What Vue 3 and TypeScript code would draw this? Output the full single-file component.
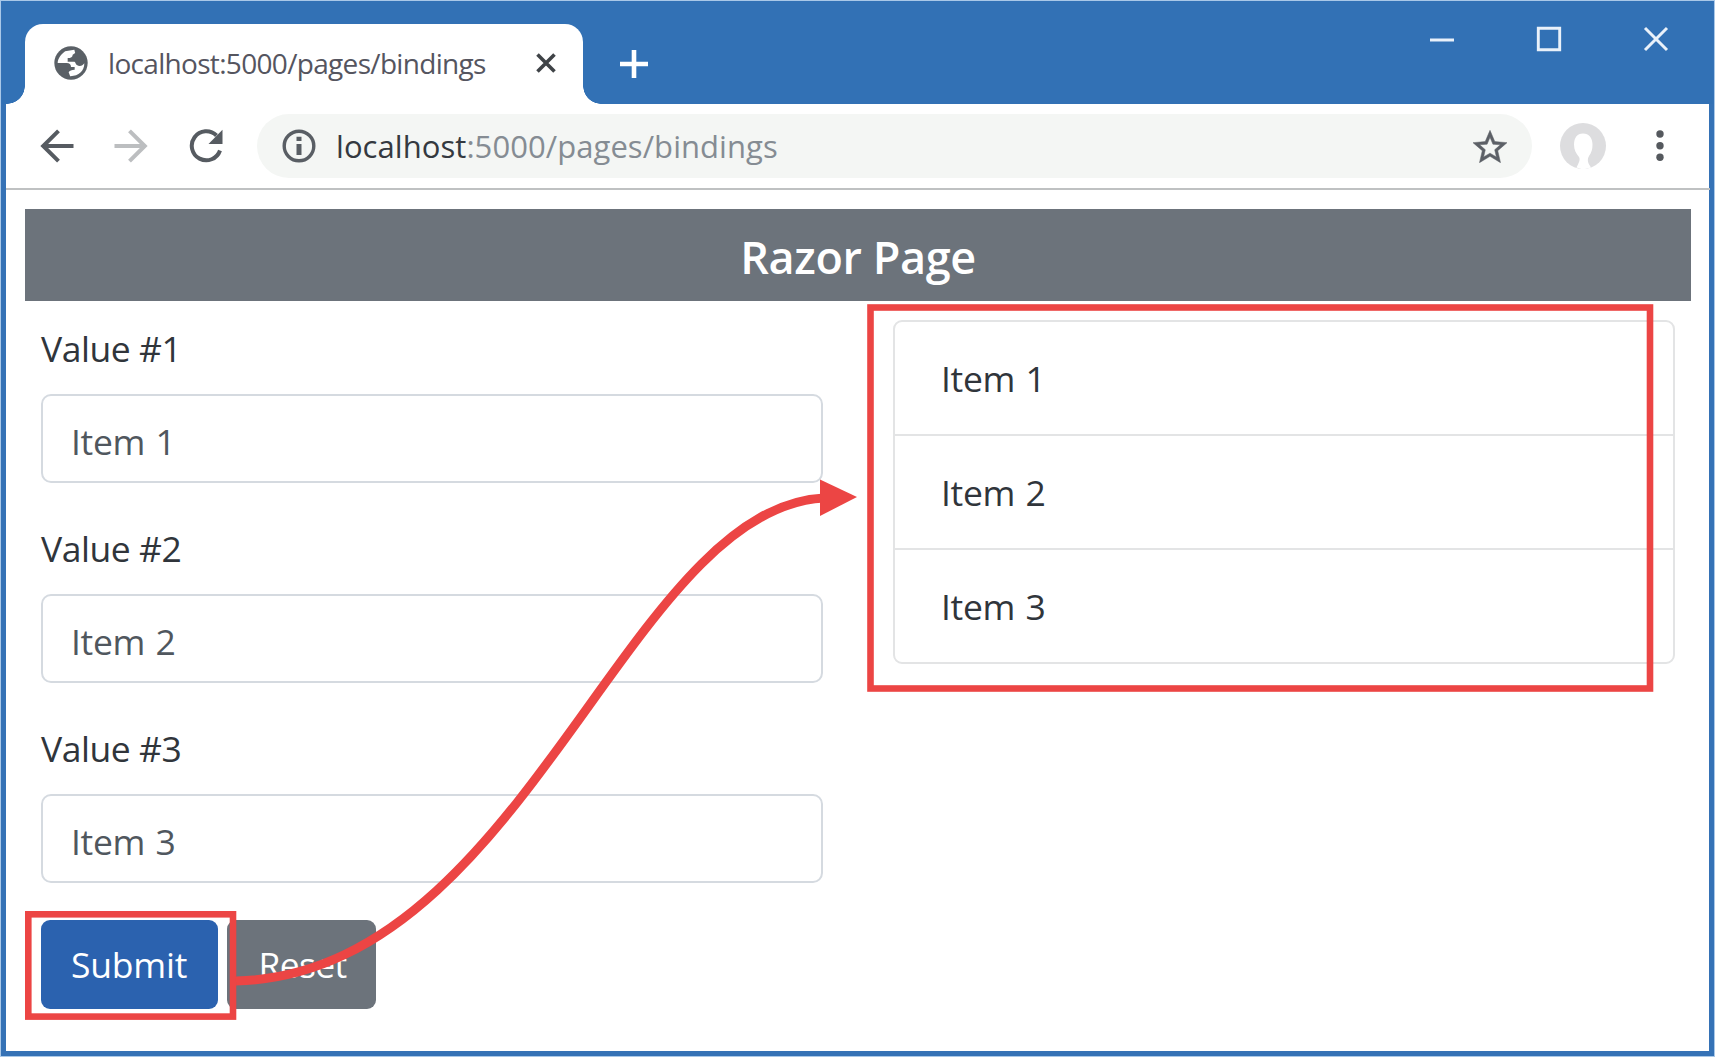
<script setup lang="ts">
import { ref } from 'vue'

const address = ref({ host: 'localhost', rest: ':5000/pages/bindings' })
const values = ref<string[]>(['Item 1', 'Item 2', 'Item 3'])
const items = ref<string[]>([...values.value])

function submit() {
  items.value = [...values.value]
}
function reset() {
  values.value = ['Item 1', 'Item 2', 'Item 3']
}
</script>

<template>
  <div class="window">
    <header class="titlebar">
      <div class="tab">
        <svg class="globe" viewBox="0 0 24 24" width="40" height="40">
          <circle cx="12" cy="12" r="10" fill="#5a6066" />
          <path fill="#fff" d="M14 4L8.500 5C6 7 4.200 9 4 12H9.500C11 12 12 12.800 12 14.400H14.200V16C12.500 16 11 16.600 10.600 17.600L11.500 19.900C16.500 20 20 17 20 12.200C19 13.800 17 14.200 15.500 13.200C14.500 12.500 15 11.200 13.500 11.200H10V9C12 9 13 8.400 13 7L14.500 6Z" />
        </svg>
        <span class="tab-title">{{ address.host }}{{ address.rest }}</span>
        <svg class="tab-close" viewBox="0 0 20 20" width="20" height="20"><path d="M1.500 1.500 18.500 18.500M18.500 1.500 1.500 18.500" stroke="#3f4347" stroke-width="3.600" /></svg>
      </div>
      <svg class="plus" viewBox="0 0 28 28" width="28" height="28"><path d="M14 0V28M0 14H28" stroke="#fff" stroke-width="4.600" /></svg>
      <div class="controls">
        <svg viewBox="0 0 26 26" width="26" height="26"><path d="M1 14H25" stroke="#e9f1fa" stroke-width="3" /></svg>
        <svg viewBox="0 0 26 26" width="26" height="26"><path d="M2.300 2.300H23.700V23.700H2.300Z" fill="none" stroke="#e9f1fa" stroke-width="2.900" /></svg>
        <svg viewBox="0 0 26 26" width="26" height="26"><path d="M2 2 24 24M24 2 2 24" stroke="#e9f1fa" stroke-width="3" /></svg>
      </div>
    </header>

    <nav class="toolbar">
      <svg class="back" viewBox="0 0 34 34" width="34" height="34"><path d="M33.500 17H3M18.500 1.800 3.200 17 18.500 32.200" fill="none" stroke="#565b61" stroke-width="4" /></svg>
      <svg class="forward" viewBox="0 0 34 34" width="34" height="34"><path d="M.5 17H31M15.500 1.800 30.800 17 15.500 32.200" fill="none" stroke="#bcbec0" stroke-width="4" /></svg>
      <svg class="reload" viewBox="0 0 34 34" width="34" height="34">
        <path d="M27.500 6.500A14.500 14.500 0 1 0 31 21.500" fill="none" stroke="#565b61" stroke-width="4" />
        <path d="M33.500 .8V15H19.500Z" fill="#565b61" />
      </svg>
      <div class="omnibox">
        <svg class="info" viewBox="0 0 34 34" width="34" height="34">
          <circle cx="17" cy="17" r="14.800" fill="none" stroke="#595e64" stroke-width="3.400" />
          <path d="M17 15V26M17 7.800V12" stroke="#595e64" stroke-width="5" />
        </svg>
        <span class="url"><span class="host">{{ address.host }}</span>{{ address.rest }}</span>
        <svg class="star" viewBox="2 2 20 19" width="34" height="33"><path fill="#5c6066" stroke="#5c6066" stroke-width=".3" d="M22 9.240l-7.190-.62L12 2 9.190 8.630 2 9.240l5.460 4.730L5.820 21 12 17.270 18.180 21l-1.630-7.030L22 9.240zM12 15.400l-3.760 2.270 1-4.280-3.320-2.880 4.380-.38L12 6.100l1.710 4.040 4.380.38-3.320 2.880 1 4.280L12 15.400z" /></svg>
      </div>
      <svg class="avatar" viewBox="0 0 46 46" width="46" height="46">
        <circle cx="23" cy="23" r="23" fill="#dddddf" />
        <path d="M23 10.500C17 10.500 14 15 14 21.500C14 27 16 30.500 19 34C20.500 36.500 19 39.500 16.500 44.500L23 46.500L31 44.500C27.500 39.500 27 36.500 29 33C31.500 29.500 32.500 26.500 32.500 21.500C32.500 15 29 10.500 23 10.500Z" fill="#fff" />
      </svg>
      <svg class="menu" viewBox="0 0 8 32" width="8" height="32"><g fill="#55595e"><circle cx="4" cy="4" r="3.700" /><circle cx="4" cy="15.700" r="3.700" /><circle cx="4" cy="27.300" r="3.700" /></g></svg>
    </nav>

    <main class="page">
      <h1 class="banner">Razor Page</h1>
      <div class="columns">
        <form class="form" @submit.prevent="submit">
          <div v-for="(_, i) in values" :key="i" class="field">
            <label :for="`value-${i}`">Value #{{ i + 1 }}</label>
            <input :id="`value-${i}`" v-model="values[i]" type="text" />
          </div>
          <div class="actions">
            <button class="btn primary" type="submit">Submit</button>
            <button class="btn secondary" type="button" @click="reset">Reset</button>
          </div>
        </form>
        <ul class="list">
          <li v-for="item in items" :key="item">{{ item }}</li>
        </ul>
      </div>
    </main>

    <svg class="callouts" viewBox="0 0 1715 1057" width="1715" height="1057">
      <g fill="none" stroke="#ec4544">
        <rect x="870.500" y="307.500" width="779.500" height="381" stroke-width="6.600" />
        <rect x="28.300" y="914.300" width="204.700" height="102.300" stroke-width="6.600" />
        <path d="M236 981C524 974 626 508 824 498" stroke-width="9" />
      </g>
      <path d="M820 479.500 857 497 820 516Z" fill="#ec4544" />
    </svg>
  </div>
</template>

<style>
body {
  margin: 0;
  background: #fff;
}
</style>

<style scoped>
* {
  box-sizing: border-box;
}
.window {
  position: relative;
  width: 1715px;
  height: 1057px;
  overflow: hidden;
  padding: 0 4px 5px 6px;
  background: #fff;
  border: 1px solid #a9c8e8;
  box-shadow: inset 0 0 0 5px #3572b6;
  font-family: "Open Sans", "Noto Sans", sans-serif;
  font-size: 35.500px;
  color: #30353b;
}
.titlebar {
  display: flex;
  height: 103px;
  margin: 0 -3px 0 -5px;
  padding: 23px 44px 0 23px;
  background: #3271b5;
}
.tab {
  position: relative;
  display: flex;
  align-items: center;
  width: 558px;
  height: 80px;
  padding: 0 27px 2px 29px;
  border-radius: 18px 18px 0 0;
  background: #fff;
}
.tab::before,
.tab::after {
  content: "";
  position: absolute;
  bottom: 0;
  width: 18px;
  height: 18px;
}
.tab::before {
  left: -18px;
  background: radial-gradient(circle at 0 0, transparent 17.500px, #fff 18px);
}
.tab::after {
  right: -18px;
  background: radial-gradient(circle at 100% 0, transparent 17.500px, #fff 18px);
}
.tab svg {
  flex: none;
}
.globe {
  margin-left: -3px;
}
.tab-title {
  flex: 1;
  margin: 0 0 1px 17px;
  font-size: 28px;
  letter-spacing: -0.680px;
  color: #55555f;
  white-space: nowrap;
}
.plus {
  margin: 26px 0 0 37px;
}
.controls {
  display: flex;
  gap: 81px;
  margin: 2px 0 0 auto;
}
.toolbar {
  display: flex;
  align-items: center;
  height: 86px;
  margin: 0 0 0 -1px;
  padding: 0 46px 0 34px;
  border-bottom: 2px solid #bfc1c2;
}
.toolbar > svg {
  flex: none;
}
.forward {
  margin-left: 40px;
}
.reload {
  margin-left: 41px;
}
.omnibox {
  display: flex;
  align-items: center;
  width: 1275px;
  height: 64px;
  margin-left: 34px;
  padding: 0 25px;
  border-radius: 32px;
  background: #f4f6f4;
}
.url {
  flex: 1;
  margin-left: 20px;
  font-size: 31px;
  letter-spacing: 0.060px;
  color: #858c93;
}
.host {
  color: #343940;
}
.avatar {
  margin-left: 28px;
}
.menu {
  margin-left: auto;
}
.page {
  padding: 19px 19px 0 18px;
}
.banner {
  height: 92px;
  margin: 0;
  font-size: 45px;
  font-weight: 600;
  letter-spacing: -0.400px;
  line-height: 95px;
  text-align: center;
  color: #fff;
  background: #6c737b;
}
.columns {
  display: flex;
  gap: 70px;
  padding: 0 16px;
}
.form,
.list {
  flex: none;
  width: 782px;
}
.form {
  padding-top: 20px;
}
.field {
  display: flex;
  flex-direction: column;
  height: 200px;
}
label {
  height: 73px;
  line-height: 55px;
  letter-spacing: -0.450px;
}
input {
  width: 100%;
  height: 89px;
  padding: 4px 28px 0;
  border: 2px solid #d5dae0;
  border-radius: 10px;
  background: #fff;
  font: inherit;
  letter-spacing: -0.300px;
  word-spacing: 1.500px;
  color: #50575e;
}
.actions {
  display: flex;
  gap: 9px;
  margin-top: -1px;
}
.btn {
  height: 89px;
  padding: 0 0 1px;
  border: 0;
  border-radius: 9px;
  font: inherit;
  letter-spacing: -0.200px;
  color: #fff;
}
.primary {
  width: 177px;
  padding-right: 1px;
  background: #2b62af;
}
.secondary {
  width: 149px;
  padding-left: 2px;
  letter-spacing: -0.700px;
  background: #6c737b;
}
.list {
  height: 344px;
  margin: 19px 0 0;
  padding: 0;
  border: 2px solid #e3e4e5;
  border-radius: 9px;
  list-style: none;
}
.list li {
  height: 114px;
  padding-left: 46px;
  line-height: 112px;
  letter-spacing: -0.300px;
  word-spacing: 1.500px;
}
.list li:first-child {
  height: 112px;
}
.list li + li {
  border-top: 2px solid #e3e4e5;
}
.callouts {
  position: absolute;
  left: -1px;
  top: -1px;
  pointer-events: none;
}
</style>
